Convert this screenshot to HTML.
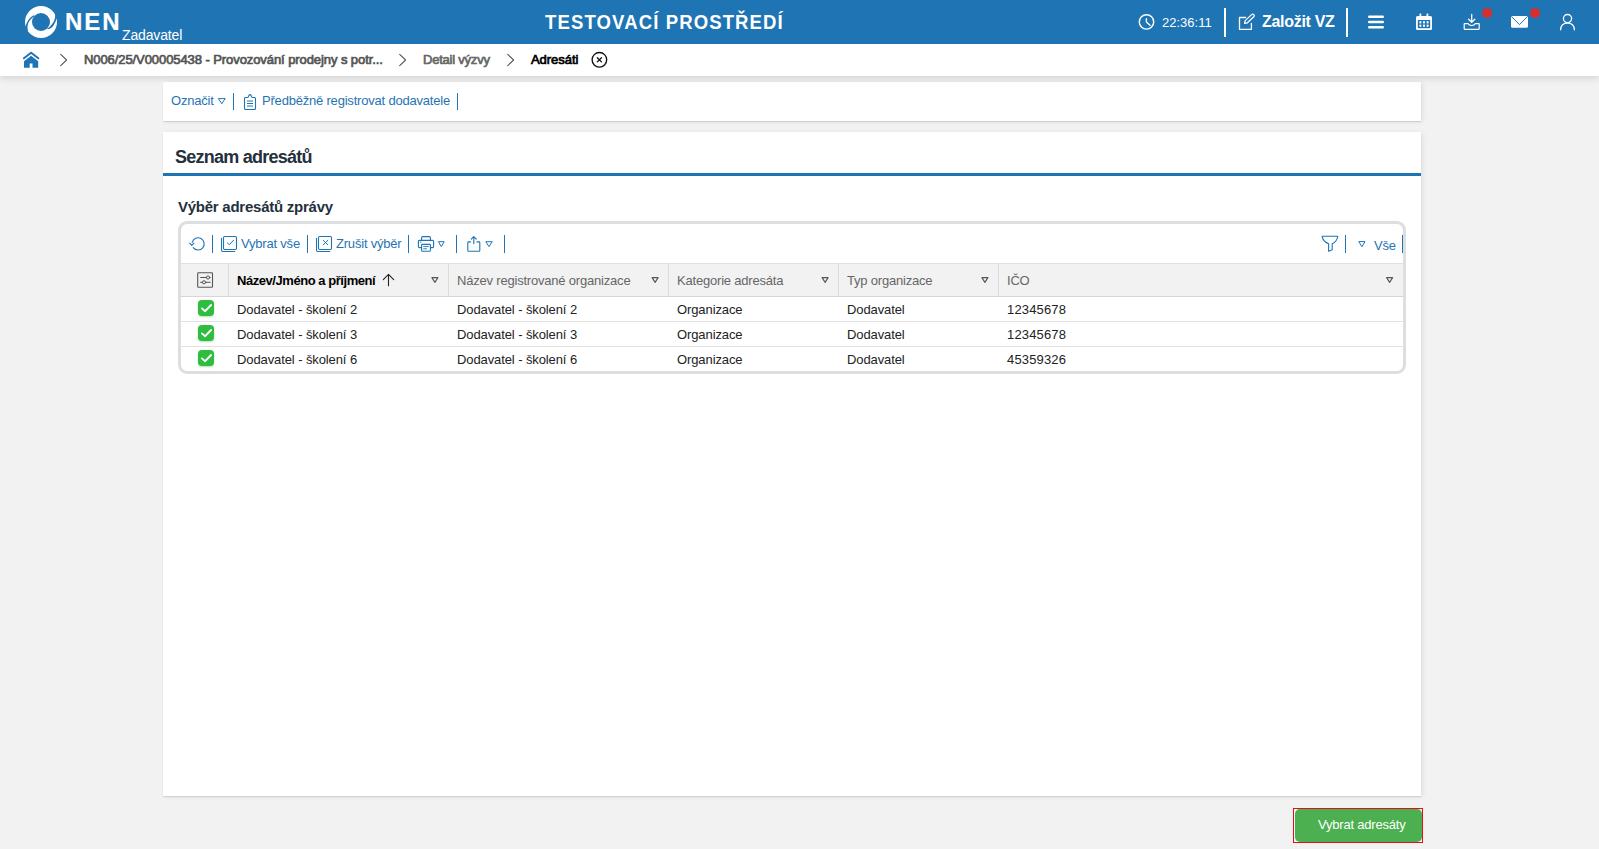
<!DOCTYPE html>
<html><head><meta charset="utf-8">
<style>
*{box-sizing:border-box;margin:0;padding:0}
html,body{width:1599px;height:849px;overflow:hidden}
body{background:#f2f2f2;font-family:"Liberation Sans",sans-serif;position:relative;color:#000}
.a{position:absolute;white-space:nowrap;line-height:1}
svg.a{overflow:visible}
#hdr{position:absolute;left:0;top:0;width:1599px;height:44px;background:#1f74b4}
#bc{position:absolute;left:0;top:44px;width:1599px;height:32px;background:#fff;box-shadow:0 3px 6px rgba(0,0,0,.11);z-index:5}
.card{position:absolute;background:#fff;box-shadow:0 1px 1px rgba(0,0,0,.1),2px 1px 5px rgba(0,0,0,.07)}
.bl{color:#1f74b4}
.sep{position:absolute;width:1px;background:#1f74b4}
.wsep{position:absolute;width:2px;background:#fff}
.cb{width:16px;height:16px;border-radius:4px;background:#2fbd3f;box-shadow:0 1px 2px rgba(40,160,50,.35)}
.t13{font-size:13px;letter-spacing:-0.2px}
.r13{font-size:13px;letter-spacing:-0.1px;color:#222}
.n13{font-size:13px;letter-spacing:0.15px;color:#222}
</style></head><body>
<!-- HEADER -->
<div id="hdr">
  <svg class="a" style="left:0;top:0" width="60" height="44" viewBox="0 0 60 44">
    <circle cx="41" cy="22" r="16" fill="#fff"/>
    <circle cx="41" cy="22" r="9" fill="#1f74b4"/>
    <polygon fill="#1f74b4" points="24.8,27 25.3,26.8 26.1,24.5 27,22.4 28.2,20.3 29.6,18.5 31,17.1 32.6,15.9 34.2,14.9 34.2,16.5 32.8,17.4 31.5,18.5 30,20.2 28.5,22.4 27.8,24.8 27.5,27.6 27.9,31 24,31"/>
    <polygon fill="#1f74b4" points="55,14 55.2,15.2 55,17.8 54.2,20.4 53.2,22.5 51.9,24.3 50.7,25.7 49.5,26.9 48.5,27.8 47.2,28.8 47.7,29.3 49.8,28.7 51.2,27.8 52.4,26.9 53.5,25.6 54.2,24.3 55.3,22.2 56,20.4 56.5,18.8 58,18.5 58,14"/>
  </svg>
  <div class="a" style="left:65px;top:10px;font-size:24px;font-weight:bold;color:#fff;letter-spacing:2px;-webkit-text-stroke:0.2px #fff">NEN</div>
  <div class="a" style="left:122px;top:28px;font-size:14px;color:#fff;letter-spacing:-0.15px">Zadavatel</div>
  <div class="a" style="left:545px;top:12px;font-size:20px;font-weight:bold;color:#fff;letter-spacing:1.2px;transform:scaleX(0.927);transform-origin:0 0">TESTOVACÍ PROSTŘEDÍ</div>
  <!-- clock -->
  <svg class="a" style="left:0;top:0" width="1599" height="44" viewBox="0 0 1599 44" fill="none" stroke="#fff" stroke-linecap="round" stroke-linejoin="round">
    <circle cx="1146.5" cy="21.9" r="7.2" stroke-width="1.4"/>
    <path d="M1146.4 18.8 V22 L1150 25.3" stroke-width="1.4"/>
    <!-- edit -->
    <path d="M1245.6 17.5 H1239.5 V29.3 H1251.4 V23.3" stroke-width="1.3"/>
    <path d="M1244.6 23.3 L1245.2 20.6 L1251.6 14.6 A1.4 1.4 0 0 1 1253.8 16.8 L1247.4 22.8 Z" stroke-width="1.3"/>
    <!-- hamburger -->
    <path d="M1369.2 16.7 H1382.8 M1369.2 22 H1382.8 M1369.2 27.3 H1382.8" stroke-width="2.4"/>
    <!-- download -->
    <path d="M1471.7 14.4 V22 M1468.6 19.3 L1471.7 22.3 L1474.8 19.3" stroke-width="1.3"/>
    <path d="M1464.6 23.6 H1468 Q1469 25.6 1471.7 25.6 Q1474.4 25.6 1475.4 23.6 H1478.8 Q1479.2 23.6 1479.2 24.2 V28.8 Q1479.2 29.3 1478.6 29.3 H1464.8 Q1464.2 29.3 1464.2 28.8 V24.2 Q1464.2 23.6 1464.6 23.6 Z" stroke-width="1.2"/>
    <!-- user -->
    <circle cx="1567.5" cy="18.6" r="4.1" stroke-width="1.3"/>
    <path d="M1560.6 29.8 Q1561 23.2 1567.5 23.2 Q1574 23.2 1574.4 29.8" stroke-width="1.3"/>
  </svg>
  <svg class="a" style="left:0;top:0" width="1599" height="44" viewBox="0 0 1599 44">
    <!-- calendar -->
    <rect x="1416" y="16" width="16" height="14" rx="1.5" fill="#fff"/>
    <rect x="1417.8" y="20" width="12.4" height="8.2" fill="#1f74b4"/>
    <rect x="1419.5" y="13.6" width="1.8" height="4" fill="#fff"/>
    <rect x="1426.5" y="13.6" width="1.8" height="4" fill="#fff"/>
    <g fill="#fff"><rect x="1419.4" y="21.2" width="2" height="2.2"/><rect x="1423" y="21.2" width="2" height="2.2"/><rect x="1426.6" y="21.2" width="2" height="2.2"/>
    <rect x="1419.4" y="24.6" width="2" height="2.2"/><rect x="1423" y="24.6" width="2" height="2.2"/><rect x="1426.6" y="24.6" width="2" height="2.2"/></g>
    <!-- mail -->
    <rect x="1511" y="16" width="17" height="11.8" rx="1.6" fill="#fff"/>
    <path d="M1511.6 16.6 L1519.5 24.6 L1527.4 16.6" stroke="#1f74b4" stroke-width="1" fill="none"/>
    <circle cx="1487.1" cy="13" r="5.1" fill="#d32f2f"/>
    <circle cx="1535" cy="13" r="5.1" fill="#d32f2f"/>
  </svg>
  <div class="a" style="left:1162px;top:16px;font-size:13px;color:#fff">22:36:11</div>
  <div class="wsep" style="left:1224px;top:8px;height:29px"></div>
  <div class="a" style="left:1262px;top:14px;font-size:16px;font-weight:bold;color:#fff;letter-spacing:-0.3px">Založit VZ</div>
  <div class="wsep" style="left:1346px;top:8px;height:29px"></div>
</div>
<!-- BREADCRUMB -->
<div id="bc">
  <svg class="a" style="left:0;top:-44px" width="700" height="76" viewBox="0 0 700 76" fill="none" stroke-linecap="round" stroke-linejoin="round">
    <path d="M23.9 58.3 L31.1 52.8 L38.3 58.3" stroke="#1f74b4" stroke-width="2"/>
    <path d="M24 61.2 L31.1 55.8 L38.2 61.2 V67.8 H32.5 V63.4 H29.7 V67.8 H24 Z" fill="#1f74b4"/>
    <path d="M60.7 54.4 L66.6 60 L60.7 65.6" stroke="#555" stroke-width="1.05"/>
    <path d="M399.7 54.4 L405.6 60 L399.7 65.6" stroke="#555" stroke-width="1.05"/>
    <path d="M507.7 54.4 L513.6 60 L507.7 65.6" stroke="#555" stroke-width="1.05"/>
    <circle cx="599.4" cy="59.8" r="7.3" stroke="#111" stroke-width="1.35"/>
    <path d="M597.3 57.7 L601.5 61.9 M601.5 57.7 L597.3 61.9" stroke="#111" stroke-width="1.3"/>
  </svg>
  <div class="a" style="left:84px;top:9px;font-size:13px;color:#555;letter-spacing:-0.08px;-webkit-text-stroke:0.7px #555">N006/25/V00005438 - Provozování prodejny s potr...</div>
  <div class="a" style="left:423px;top:9px;font-size:13px;color:#666;letter-spacing:-0.22px;-webkit-text-stroke:0.7px #666">Detail výzvy</div>
  <div class="a" style="left:531px;top:9px;font-size:13px;color:#000;letter-spacing:-0.05px;-webkit-text-stroke:0.7px #000">Adresáti</div>
</div>
<!-- TOOLBAR CARD -->
<div class="card" style="left:163px;top:82px;width:1258px;height:39px"></div>
<div class="a bl t13" style="left:171px;top:94px">Označit</div>
<div class="a bl t13" style="left:262px;top:94px">Předběžně registrovat dodavatele</div>
<div class="sep" style="left:233px;top:93px;height:17px"></div>
<div class="sep" style="left:457px;top:93px;height:17px"></div>
<svg class="a" style="left:0;top:0" width="1599" height="260" viewBox="0 0 1599 260" fill="none" stroke="#1f74b4" stroke-linejoin="round" stroke-linecap="round">
  <path d="M218.8 98.6 H225.2 L222 103.4 Z" stroke-width="1"/>
  <path d="M247.6 97.5 H245.5 Q244.5 97.5 244.5 98.5 V108.5 Q244.5 109.5 245.5 109.5 H254.5 Q255.5 109.5 255.5 108.5 V98.5 Q255.5 97.5 254.5 97.5 H252.4 Q251.9 97.5 251.6 96.6 Q251 94.6 250 94.6 Q249 94.6 248.4 96.6 Q248.1 97.5 247.6 97.5 Z" stroke-width="1.1"/>
  <path d="M247 101 H253 M247 103.5 H253 M247 106 H253" stroke-width="1" stroke-linecap="butt"/>
</svg>
<!-- MAIN CARD -->
<div class="card" style="left:163px;top:132px;width:1258px;height:664px"></div>
<div class="a" style="left:175px;top:148px;font-size:18px;font-weight:bold;color:#24303c;letter-spacing:-0.75px">Seznam adresátů</div>
<div class="a" style="left:163px;top:173px;width:1258px;height:3px;background:#1f74b4"></div>
<div class="a" style="left:178px;top:199px;font-size:15px;font-weight:bold;color:#24303c;letter-spacing:-0.25px">Výběr adresátů zprávy</div>
<!-- GRID -->
<div class="a" style="left:178px;top:221px;width:1228px;height:153px;border:3px solid #dcdee0;border-radius:9px;background:#fff"></div>
<div class="a" style="left:181px;top:263px;width:1222px;height:34px;background:#f2f2f2;border-top:1px solid #e0e0e0;border-bottom:1px solid #d6d6d6"></div>
<div class="a" style="left:181px;top:321px;width:1222px;height:1px;background:#e2e2e2"></div>
<div class="a" style="left:181px;top:346px;width:1222px;height:1px;background:#e2e2e2"></div>
<div class="a" style="left:228px;top:264px;width:1px;height:32px;background:#dcdcdc"></div>
<div class="a" style="left:448px;top:264px;width:1px;height:32px;background:#dcdcdc"></div>
<div class="a" style="left:668px;top:264px;width:1px;height:32px;background:#dcdcdc"></div>
<div class="a" style="left:838px;top:264px;width:1px;height:32px;background:#dcdcdc"></div>
<div class="a" style="left:998px;top:264px;width:1px;height:32px;background:#dcdcdc"></div>
<!-- grid toolbar text -->
<div class="a bl t13" style="left:241px;top:237px">Vybrat vše</div>
<div class="a bl t13" style="left:336px;top:237px">Zrušit výběr</div>
<div class="a bl t13" style="left:1374px;top:239px">Vše</div>
<div class="sep" style="left:212px;top:235px;height:18px"></div>
<div class="sep" style="left:307px;top:235px;height:18px"></div>
<div class="sep" style="left:408px;top:235px;height:18px"></div>
<div class="sep" style="left:456px;top:235px;height:18px"></div>
<div class="sep" style="left:504px;top:235px;height:18px"></div>
<div class="sep" style="left:1345px;top:235px;height:18px"></div>
<div class="sep" style="left:1402px;top:235px;height:18px"></div>
<!-- header texts -->
<div class="a" style="left:237px;top:274px;font-size:13px;font-weight:bold;color:#000;letter-spacing:-0.45px">Název/Jméno a příjmení</div>
<div class="a t13" style="left:457px;top:274px;color:#666">Název registrované organizace</div>
<div class="a t13" style="left:677px;top:274px;color:#666">Kategorie adresáta</div>
<div class="a t13" style="left:847px;top:274px;color:#666">Typ organizace</div>
<div class="a t13" style="left:1007px;top:274px;color:#666">IČO</div>
<!-- rows -->
<div class="a r13" style="left:237px;top:303px">Dodavatel - školení 2</div>
<div class="a r13" style="left:457px;top:303px">Dodavatel - školení 2</div>
<div class="a r13" style="left:677px;top:303px">Organizace</div>
<div class="a r13" style="left:847px;top:303px">Dodavatel</div>
<div class="a n13" style="left:1007px;top:303px">12345678</div>
<div class="a r13" style="left:237px;top:328px">Dodavatel - školení 3</div>
<div class="a r13" style="left:457px;top:328px">Dodavatel - školení 3</div>
<div class="a r13" style="left:677px;top:328px">Organizace</div>
<div class="a r13" style="left:847px;top:328px">Dodavatel</div>
<div class="a n13" style="left:1007px;top:328px">12345678</div>
<div class="a r13" style="left:237px;top:353px">Dodavatel - školení 6</div>
<div class="a r13" style="left:457px;top:353px">Dodavatel - školení 6</div>
<div class="a r13" style="left:677px;top:353px">Organizace</div>
<div class="a r13" style="left:847px;top:353px">Dodavatel</div>
<div class="a n13" style="left:1007px;top:353px">45359326</div>
<!-- checkboxes -->
<div class="a cb" style="left:198px;top:300px"></div>
<div class="a cb" style="left:198px;top:325px"></div>
<div class="a cb" style="left:198px;top:350px"></div>
<!-- grid icons -->
<svg class="a" style="left:0;top:0" width="1599" height="380" viewBox="0 0 1599 380" fill="none" stroke="#1f74b4" stroke-linejoin="round" stroke-linecap="round">
  <!-- refresh -->
  <path d="M192.2 242.3 A6.1 6.1 0 1 1 193.2 247.6" stroke-width="1.1"/>
  <path d="M189.7 243.2 L191.8 245.3 L193.9 243.2" stroke-width="1.1"/>
  <!-- vybrat vse -->
  <rect x="223.5" y="236.5" width="13" height="13" rx="1.2" stroke-width="1.1"/>
  <path d="M221.5 238.4 V250.3 Q221.5 251.5 222.7 251.5 H234.8" stroke-width="1.1"/>
  <path d="M227.4 243.1 L229.4 244.7 L233.6 240.2" stroke-width="1"/>
  <!-- zrusit vyber -->
  <rect x="318.5" y="236.5" width="13" height="13" rx="1.2" stroke-width="1.1"/>
  <path d="M316.5 238.4 V250.3 Q316.5 251.5 317.7 251.5 H329.8" stroke-width="1.1"/>
  <path d="M323.2 240.3 L327.8 244.8 M327.8 240.3 L323.2 244.8" stroke-width="1"/>
  <!-- print -->
  <path d="M421.6 240.3 V237.6 Q421.6 236.6 422.6 236.6 H429.4 Q430.4 236.6 430.4 237.6 V240.3" stroke-width="1.1"/>
  <path d="M421.4 247.6 H419.4 Q418.4 247.6 418.4 246.6 V241.4 Q418.4 240.4 419.4 240.4 H432.6 Q433.6 240.4 433.6 241.4 V246.6 Q433.6 247.6 432.6 247.6 H430.6" stroke-width="1.1"/>
  <rect x="421.6" y="244.4" width="8.8" height="6.9" rx="0.8" stroke-width="1.1"/>
  <path d="M423.6 246.6 H428.4 M423.6 248.8 H426.6" stroke-width="0.9"/>
  <path d="M420.2 242.2 H421" stroke-width="0.9"/>
  <path d="M438.8 241.7 H444.2 L441.5 246.3 Z" stroke-width="1"/>
  <!-- share -->
  <path d="M470.6 241.9 H468.6 Q467.8 241.9 467.8 242.7 V250.5 Q467.8 251.3 468.6 251.3 H479 Q479.8 251.3 479.8 250.5 V242.7 Q479.8 241.9 479 241.9 H477" stroke-width="1.1"/>
  <path d="M473.8 243.6 V236.8 M471.3 239.2 L473.8 236.6 L476.3 239.2" stroke-width="1.1"/>
  <path d="M486.2 241.7 H492.2 L489.2 246.3 Z" stroke-width="1"/>
  <!-- filter -->
  <path d="M1322.4 236.2 H1337.4 Q1337.8 236.2 1337.6 237 Q1336.8 241.8 1332.2 243.8 V249.8 L1328.6 251.2 V243.8 Q1323.6 241.8 1322.2 237 Q1322 236.2 1322.4 236.2 Z" stroke-width="1.1"/>
  <path d="M1359.2 241.6 H1365 L1362.1 246.4 Z" stroke-width="1"/>
  <!-- header triangles -->
  <path d="M431.9 277.6 H437.9 L434.9 282.4 Z" stroke="#555" stroke-width="1.1"/>
  <path d="M652.1 277.6 H658.1 L655.1 282.4 Z" stroke="#555" stroke-width="1.1"/>
  <path d="M822.1 277.6 H828.1 L825.1 282.4 Z" stroke="#555" stroke-width="1.1"/>
  <path d="M981.9 277.6 H987.9 L984.9 282.4 Z" stroke="#555" stroke-width="1.1"/>
  <path d="M1386.6 277.6 H1392.6 L1389.6 282.4 Z" stroke="#555" stroke-width="1.1"/>
  <!-- sort arrow -->
  <path d="M388.5 274.6 V285.8 M383.3 279.6 L388.5 274.4 L393.7 279.6" stroke="#222" stroke-width="1.1"/>
  <!-- settings -->
  <rect x="197.7" y="272.7" width="14.8" height="14.6" rx="0.8" stroke="#555" stroke-width="1.1"/>
  <path d="M200.6 277.5 H206.3 M209.7 277.5 H210.2 M200.6 282.3 H202.3 M205.7 282.3 H210.2" stroke="#555" stroke-width="1"/>
  <circle cx="208" cy="277.5" r="1.6" stroke="#555" stroke-width="1"/>
  <circle cx="204" cy="282.3" r="1.6" stroke="#555" stroke-width="1"/>
  <!-- checks -->
  <path d="M201.9 308.4 L205.1 311.2 L211.1 305.0" stroke="#fff" stroke-width="1.9"/>
  <path d="M201.9 333.4 L205.1 336.2 L211.1 330.0" stroke="#fff" stroke-width="1.9"/>
  <path d="M201.9 358.4 L205.1 361.2 L211.1 355.0" stroke="#fff" stroke-width="1.9"/>
</svg>
<!-- BUTTON -->
<div class="a" style="left:1293px;top:808px;width:130px;height:35px;border:1px solid #e3101c"></div>
<div class="a" style="left:1295px;top:809px;width:127px;height:33px;background:#4caf50;border-radius:5px"></div>
<div class="a" style="left:1318px;top:818px;font-size:13px;color:#fff;letter-spacing:-0.2px">Vybrat adresáty</div>
</body></html>
